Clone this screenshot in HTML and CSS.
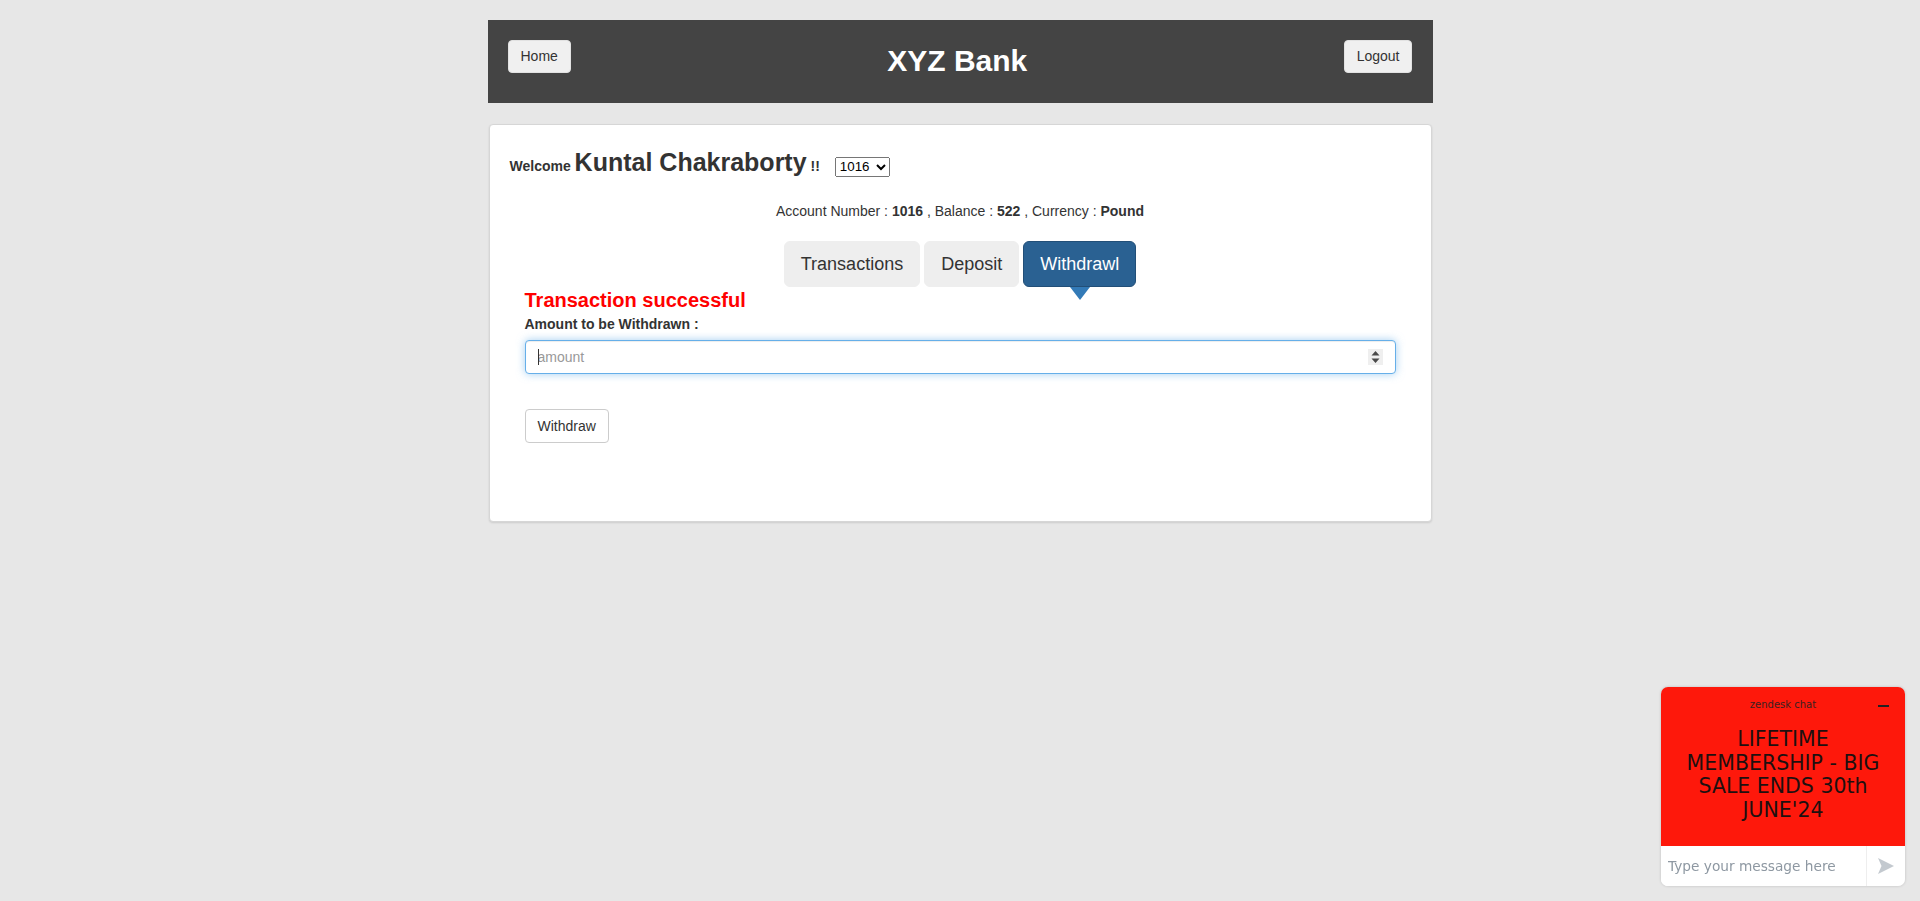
FILE: index.html
```html
<!DOCTYPE html>
<html lang="en">
<head>
<meta charset="utf-8">
<title>XYZ Bank</title>
<link rel="stylesheet" href="styles.css">
</head>
<body>
<div class="page">
  <header class="topbar">
    <button class="btn btn-nav">Home</button>
    <h1 class="title">XYZ Bank</h1>
    <button class="btn btn-nav">Logout</button>
  </header>
  <div class="card">
    <div class="welcome"><strong>Welcome <span class="name">Kuntal Chakraborty</span> !!</strong><select class="acct-select"><option>1016</option></select></div>
    <div class="acct-info">Account Number : <strong>1016</strong> , Balance : <strong>522</strong> , Currency : <strong>Pound</strong></div>
    <div class="tabs">
      <button class="tab">Transactions</button>
      <button class="tab">Deposit</button>
      <button class="tab tab-active">Withdrawl</button>
    </div>
    <form class="form">
      <div class="msg">Transaction successful</div>
      <label class="label">Amount to be Withdrawn :</label>
      <div class="field">
        <input class="input" type="text" placeholder="amount">
        <span class="caret"></span>
        <span class="spin"><svg width="15" height="16" viewBox="0 0 15 16"><path d="M3.5 6.5 L7.5 2 L11.5 6.5 Z M3.5 9.5 L7.5 14 L11.5 9.5 Z" fill="#4a4a4a"/></svg></span>
      </div>
      <button class="btn btn-submit" type="button">Withdraw</button>
    </form>
  </div>
</div>

<div class="chat">
  <div class="chat-top">
    <div class="chat-brand">zendesk chat</div>
    <span class="chat-min"></span>
    <div class="chat-promo">LIFETIME MEMBERSHIP - BIG SALE ENDS 30th JUNE'24</div>
  </div>
  <div class="chat-bottom">
    <input class="chat-input" type="text" placeholder="Type your message here">
    <span class="chat-send"><svg width="16" height="16" viewBox="0 0 16 16"><path d="M0 0 L16 8 L0 16 L3.5 8 Z" fill="#c3c9cf"/></svg></span>
  </div>
</div>
</body>
</html>
```

FILE: styles.css
```css
* { box-sizing: border-box; }
html, body { margin: 0; padding: 0; }
body {
  background: #e7e7e7;
  font-family: "Liberation Sans", Arial, Helvetica, sans-serif;
  font-size: 14px;
  line-height: 20px;
  color: #333;
  height: 901px;
}
.page { width: 945px; margin: 0 auto; padding-top: 20px; }

.topbar {
  height: 83px;
  background: #444;
  padding: 20px;
  display: flex;
  justify-content: space-between;
  align-items: flex-start;
}
.title {
  margin: 4px 0 0;
  font-size: 30px;
  line-height: 33px;
  font-weight: bold;
  color: #fff;
}
.btn {
  font-family: inherit;
  font-size: 14px;
  line-height: 20px;
  padding: 6px 12px;
  border-radius: 4px;
  color: #333;
  cursor: pointer;
}
.btn-nav { background: #f0f0f0; border: 1px solid #e2e2e2; height: 33px; padding-top: 5px; padding-bottom: 6px; }

.card {
  margin: 21px 1px 0;
  background: #fff;
  border: 1px solid #d6d6d6;
  border-radius: 4px;
  box-shadow: 0 1px 2px rgba(0,0,0,0.12);
  padding: 20px;
}
.welcome { margin-top: 2px; font-size: 14px; line-height: 30px; }
.name { font-size: 25px; }
.acct-select {
  margin-left: 15px;
  font-family: "Liberation Sans", Arial, sans-serif;
  font-size: 13.33px;
  height: 20px;
  width: 55px;
  vertical-align: baseline;
}
.acct-info { margin-top: 20px; text-align: center; }

.tabs { margin-top: 20px; display: flex; justify-content: center; gap: 4px; }
.tab {
  font-family: inherit;
  font-size: 18px;
  line-height: 24px;
  padding: 10px 16px;
  background: #eee;
  border: 1px solid #eee;
  border-radius: 6px;
  color: #333;
  position: relative;
}
.tab-active { background: #2a6192; border-color: #224f78; color: #fff; }
.tab-active::after {
  content: "";
  position: absolute;
  left: 50%;
  top: calc(100% + 1px);
  margin-left: -10px;
  border-left: 10px solid transparent;
  border-right: 10px solid transparent;
  border-top: 13px solid #337ab7;
}

.form { padding: 0 15px; margin: 2px 0 0; display: flex; flex-direction: column; align-items: flex-start; }
.msg { color: #f00; font-size: 20px; line-height: 22px; font-weight: bold; }
.label { display: block; margin-top: 3px; margin-bottom: 6px; font-weight: bold; }
.field { position: relative; align-self: stretch; }
.input {
  display: block;
  width: 100%;
  height: 34px;
  padding: 6px 12px;
  font-family: inherit;
  font-size: 14px;
  color: #555;
  border: 1px solid #66afe9;
  border-radius: 4px;
  outline: 0;
  box-shadow: inset 0 1px 1px rgba(0,0,0,.075), 0 0 8px rgba(102,175,233,.6);
}
.input::placeholder { color: #999; }
.caret { position: absolute; left: 13px; top: 9px; width: 1px; height: 16px; background: #333; }
.spin {
  position: absolute;
  right: 13px;
  top: 9px;
  width: 15px;
  height: 16px;
  background: #efefef;
  display: flex;
}
.btn-submit { margin-top: 35px; margin-bottom: 58px; background: #fff; border: 1px solid #ccc; }

.chat {
  position: fixed;
  right: 15px;
  bottom: 15px;
  width: 244px;
  border-radius: 7px;
  overflow: hidden;
  box-shadow: 0 0 3px rgba(0,0,0,.18);
  font-family: "DejaVu Sans", Verdana, sans-serif;
}
.chat-top {
  position: relative;
  height: 159px;
  background: #fe180b;
  padding: 12px 18px 0;
  text-align: center;
  color: #1e1010;
}
.chat-brand { font-size: 10px; line-height: 12px; color: #3a2020; }
.chat-min { position: absolute; right: 16px; top: 18px; width: 11px; height: 2px; background: #222; }
.chat-promo { margin-top: 17px; font-size: 20.5px; line-height: 23.5px; }
.chat-bottom { height: 40px; background: #fff; display: flex; }
.chat-input {
  flex: 1;
  min-width: 0;
  border: 0;
  outline: 0;
  padding: 0 0 0 7px;
  font-family: "DejaVu Sans", Verdana, sans-serif;
  font-size: 13.7px;
  background: #fff;
}
.chat-input::placeholder { color: #8e98a2; }
.chat-send { width: 39px; border-left: 1px solid #eee; display: flex; align-items: center; justify-content: center; }
```
